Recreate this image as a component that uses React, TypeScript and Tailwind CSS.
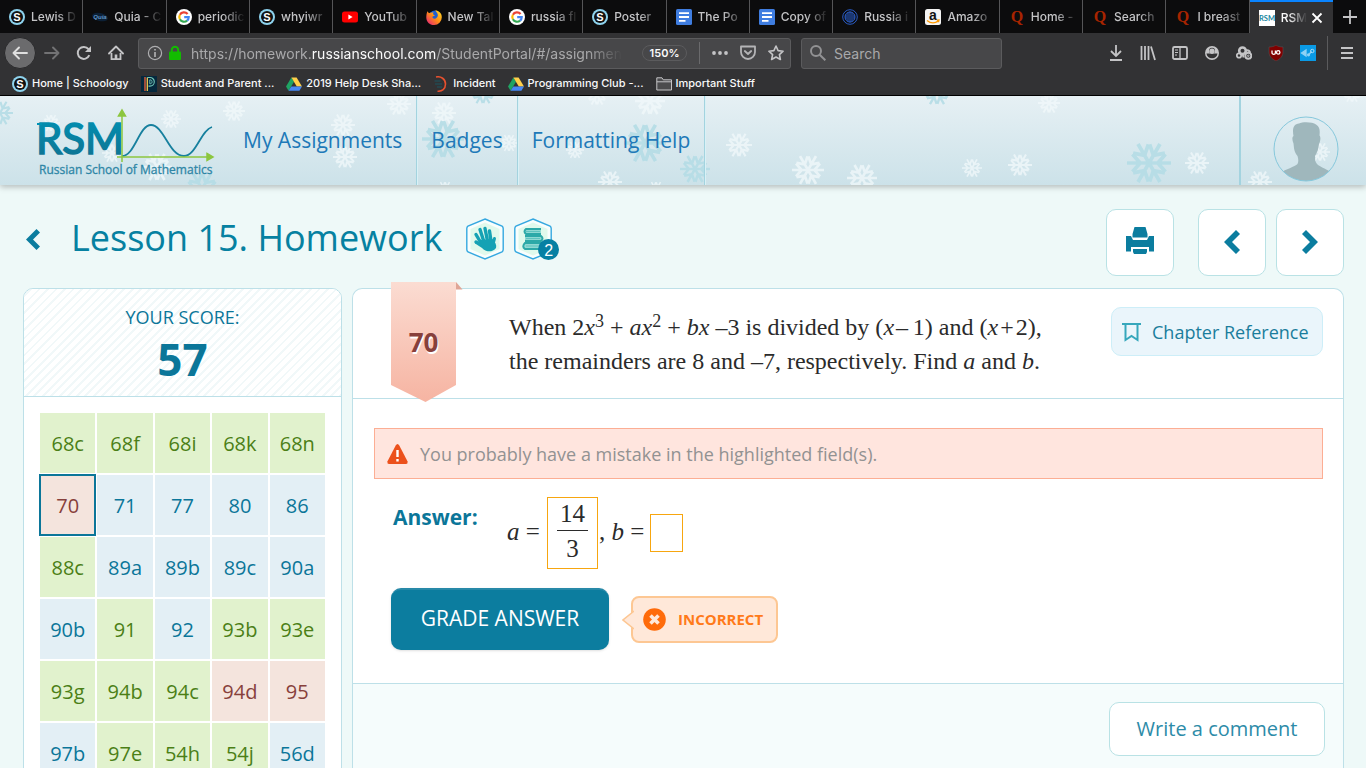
import React from "react";

const UI = "font-['Inter','Liberation_Sans',sans-serif]";
const SANS = "font-['Open_Sans','Noto_Sans',sans-serif]";
const SERIF = "font-['Liberation_Serif',serif]";

/* ---------- Site icons ---------- */

function SchoologyIcon() {
  return (
    <svg className="size-4 shrink-0" viewBox="0 0 16 16" aria-hidden="true">
      <circle cx="8" cy="8" r="8" fill="#8ed3ee" />
      <circle cx="8" cy="8" r="6" fill="#111" />
      <text x="8" y="12" textAnchor="middle" fontSize="11" fontWeight="700" fontFamily="Liberation Sans, sans-serif" fill="#fff">S</text>
    </svg>
  );
}

function QuiaIcon() {
  return (
    <svg className="size-4 shrink-0" viewBox="0 0 16 16" aria-hidden="true">
      <ellipse cx="8" cy="8" rx="8" ry="4" fill="#0c2036" transform="rotate(12 8 8)" />
      <text x="8" y="10" textAnchor="middle" fontSize="6" fontStyle="italic" fontWeight="700" fontFamily="Liberation Sans, sans-serif" fill="#5f93c4">Quia</text>
    </svg>
  );
}

function GoogleIcon() {
  return (
    <svg className="size-4 shrink-0" viewBox="0 0 16 16" aria-hidden="true">
      <circle cx="8" cy="8" r="8" fill="#fff" />
      <g fill="none" strokeWidth="2.2">
        <path d="M11.6 5A4.7 4.7 0 0 0 3.9 5.7" stroke="#ea4335" />
        <path d="M3.9 5.7a4.7 4.7 0 0 0 0 4.6" stroke="#fbbc05" />
        <path d="M3.9 10.3a4.7 4.7 0 0 0 7.2 1.3" stroke="#34a853" />
        <path d="M11.1 11.6A4.7 4.7 0 0 0 12.7 8.2H8.2" stroke="#4285f4" />
      </g>
    </svg>
  );
}

function YoutubeIcon() {
  return (
    <svg className="size-4 shrink-0" viewBox="0 0 16 16" aria-hidden="true">
      <rect x="0" y="2.5" width="16" height="11" rx="2.5" fill="#f00" />
      <path d="M6.4 5.6v4.8L10.6 8z" fill="#fff" />
    </svg>
  );
}

function FirefoxIcon() {
  return (
    <svg className="size-4 shrink-0" viewBox="0 0 16 16" aria-hidden="true">
      <defs>
        <linearGradient id="fox" x1="1" y1="0" x2="0" y2="1">
          <stop offset="0" stopColor="#ffe226" />
          <stop offset=".5" stopColor="#ff8a16" />
          <stop offset="1" stopColor="#e31587" />
        </linearGradient>
      </defs>
      <circle cx="8.6" cy="7" r="5.4" fill="#1f5fd0" />
      <path d="M1.4 2.2 3 4.2c1-.6 2-.7 3-.5L7.4 3 7 5.3l2 1.2-2.4.9c-.6 1.6 1 2.8 2.6 2.3 2.4-.8 3.2-3 2.2-5.2L9.2 1.2c4 .4 6.6 3.2 6.6 7A7.7 7.7 0 0 1 8 16C3.5 16 .3 12.7.3 8.4c0-2.5.4-4.4 1.1-6.2z" fill="url(#fox)" />
    </svg>
  );
}

function DocsIcon() {
  return (
    <svg className="size-4 shrink-0" viewBox="0 0 16 16" aria-hidden="true">
      <rect width="16" height="16" rx="1.5" fill="#3f7de0" />
      <path d="M3 4.2h10M3 8h10M3 11.8h6.5" stroke="#fff" strokeWidth="1.8" />
    </svg>
  );
}

function WilsonIcon() {
  return (
    <svg className="size-4 shrink-0" viewBox="0 0 16 16" fill="none" stroke="#2a5cc4" aria-hidden="true">
      <circle cx="8" cy="8" r="7.3" />
      <circle cx="8" cy="8" r="5" />
      <path d="M8 2.5v11M6 3.5v9M10 3.5v9M4 5.5v5M12 5.5v5" strokeWidth="1.1" />
    </svg>
  );
}

function AmazonIcon() {
  return (
    <svg className="size-4 shrink-0" viewBox="0 0 16 16" aria-hidden="true">
      <rect width="16" height="16" rx="2.5" fill="#f4f4f4" />
      <text x="8" y="10.5" textAnchor="middle" fontSize="14" fontWeight="700" fontFamily="Liberation Sans, sans-serif" fill="#111">a</text>
      <path d="M2 11.5c3.5 2.8 8 2.9 11.5.4M11.8 11.2l2.2-.2-.5 2.2" fill="none" stroke="#f90" strokeWidth="1.3" />
    </svg>
  );
}

function QuoraIcon() {
  return (
    <svg className="size-4 shrink-0" viewBox="0 0 16 16" aria-hidden="true">
      <text x="8" y="12.5" textAnchor="middle" fontSize="16" fontWeight="700" fontFamily="Liberation Serif, serif" fill="#a82400">Q</text>
    </svg>
  );
}

function RsmIcon() {
  return (
    <svg className="size-4 shrink-0" viewBox="0 0 16 16" aria-hidden="true">
      <rect width="16" height="16" fill="#fff" />
      <text x="8" y="10.5" textAnchor="middle" fontSize="7.5" fontWeight="700" fontFamily="Lato, sans-serif" fill="#1586a0">RSM</text>
    </svg>
  );
}

function DriveIcon() {
  return (
    <svg className="size-4 shrink-0" viewBox="0 0 16 16" aria-hidden="true">
      <path d="M5.4 1.5 0 10.5l2.6 4.3L8 5.8z" fill="#1fa463" />
      <path d="M5.4 1.5h5.2l5.4 9h-5.2z" fill="#ffd04b" />
      <path d="M2.6 14.8 5.3 10.5H16l-2.6 4.3z" fill="#4688f4" />
    </svg>
  );
}

function PowerSchoolIcon() {
  return (
    <svg className="size-4 shrink-0" viewBox="0 0 16 16" fill="none" aria-hidden="true">
      <rect width="16" height="16" fill="#06283d" />
      <path d="M4 1v14" stroke="#f0603c" strokeWidth="1.3" />
      <path d="M6.3 15V1.5" stroke="#f3c74f" strokeWidth="1.3" />
      <path d="M6.3 1.5H9a4.300 4.300 0 0 1 0 8.600H7.500" stroke="#6fc6b8" strokeWidth="1.1" />
      <path d="M8.800 3.800v4c3 .4 3-4.400 0-4z" stroke="#6fc6b8" strokeWidth=".9" />
    </svg>
  );
}

function IncidentIcon() {
  return (
    <svg className="size-4 shrink-0" viewBox="0 0 16 16" fill="none" aria-hidden="true">
      <path d="M3 1c5-1 9.500 2 9.500 7s-3.500 7.500-8 7.200" stroke="#e8512f" strokeWidth="1.600" />
      <path d="M1.500 5h6M2 8h7M4 11h5" stroke="#26434a" strokeWidth="2" />
    </svg>
  );
}

function FolderIcon() {
  return (
    <svg className="size-4 shrink-0" viewBox="0 0 16 16" fill="#4b4b4d" stroke="#c4c4c6" aria-hidden="true">
      <path d="M.8 14V1.800H6l1.200 2h8.300V14z" />
      <path d="M.8 5.800h14.700" />
    </svg>
  );
}

/* ---------- Browser chrome ---------- */

const tabs = [
  { icon: <SchoologyIcon />, title: "Lewis D" },
  { icon: <QuiaIcon />, title: "Quia - C" },
  { icon: <GoogleIcon />, title: "periodic" },
  { icon: <SchoologyIcon />, title: "whyiwr" },
  { icon: <YoutubeIcon />, title: "YouTub" },
  { icon: <FirefoxIcon />, title: "New Tal" },
  { icon: <GoogleIcon />, title: "russia fl" },
  { icon: <SchoologyIcon />, title: "Poster" },
  { icon: <DocsIcon />, title: "The Po" },
  { icon: <DocsIcon />, title: "Copy of" },
  { icon: <WilsonIcon />, title: "Russia i" },
  { icon: <AmazonIcon />, title: "Amazo" },
  { icon: <QuoraIcon />, title: "Home -" },
  { icon: <QuoraIcon />, title: "Search" },
  { icon: <QuoraIcon />, title: "I breast" },
];

function TabStrip() {
  return (
    <div className="flex h-[33px] bg-[#0c0c0d] text-xs font-medium text-[#c4c4c6]">
      {tabs.map((t, i) => (
        <button key={i} className="flex min-w-0 flex-1 items-center gap-1.5 border-r border-[#555557] pr-px pl-[9px]">
          {t.icon}
          <span className="min-w-0 flex-1 overflow-hidden text-left whitespace-nowrap [mask-image:linear-gradient(to_right,#000_50%,transparent_95%)]">{t.title}</span>
        </button>
      ))}
      <div className="flex min-w-0 flex-1 items-center border-t-2 border-[#0a84ff] bg-[#323234] pr-0.5 pl-[9px]">
        <RsmIcon />
        <span className="ml-1.5 min-w-0 flex-1 overflow-hidden whitespace-nowrap text-[#f9f9fa] [mask-image:linear-gradient(to_right,#000_30%,transparent)]">RSM</span>
        <button aria-label="Close tab" className="mr-2 ml-1 text-white">
          <svg className="size-3" viewBox="0 0 12 12" stroke="currentColor" strokeWidth="1.800"><path d="m1.500 1.500 9 9M10.500 1.500l-9 9" /></svg>
        </button>
      </div>
      <button aria-label="New tab" className="flex w-[33px] items-center justify-center text-[#c4c4c6]">
        <svg className="size-4" viewBox="0 0 16 16" stroke="currentColor" strokeWidth="1.800"><path d="M8 1v14M1 8h14" /></svg>
      </button>
    </div>
  );
}

function ToolButton({ label, children }: { label: string; children: React.ReactNode }) {
  return (
    <button aria-label={label} className="flex size-8 shrink-0 items-center justify-center text-[#c4c4c6]">
      <svg className="size-4" viewBox="0 0 16 16" fill="none" stroke="currentColor" strokeWidth="1.800">{children}</svg>
    </button>
  );
}

function Toolbar() {
  return (
    <div className="flex h-10 items-center pr-[3px] pl-1">
      <button aria-label="Back" className="flex size-8 shrink-0 items-center justify-center rounded-full border border-[#29292b] bg-[#6b6b6d] text-[#e0e0e0]">
        <svg className="size-4" viewBox="0 0 16 16" fill="none" stroke="currentColor" strokeWidth="1.900" strokeLinecap="round" strokeLinejoin="round"><path d="M15 8H1.500M7 2.500 1.500 8 7 13.500" /></svg>
      </button>
      <button aria-label="Forward" className="flex size-8 shrink-0 items-center justify-center text-[#727274]">
        <svg className="size-4" viewBox="0 0 16 16" fill="none" stroke="currentColor" strokeWidth="1.900" strokeLinecap="round" strokeLinejoin="round"><path d="M1 8h13.500M9 2.500 14.500 8 9 13.500" /></svg>
      </button>
      <ToolButton label="Reload">
        <path d="M13.300 10.200A6 6 0 1 1 12.500 4.200" strokeWidth="2" />
        <path d="M15 1v6H9z" fill="currentColor" stroke="none" />
      </ToolButton>
      <ToolButton label="Home">
        <path d="M1 8.500 8 1.500l7 7" strokeLinecap="round" strokeLinejoin="round" />
        <path d="M3.500 8v6.200h9V8" />
        <path d="M8 14V9.500" strokeWidth="2.600" />
      </ToolButton>
      <div className="ml-1.5 flex h-[31px] min-w-0 flex-1 items-center rounded-[3px] border border-[#5b5b5d] bg-[#474749]">
        <svg className="ml-2 size-4 shrink-0 text-[#aeaeb0]" viewBox="0 0 16 16" fill="none" stroke="currentColor" aria-hidden="true">
          <circle cx="8" cy="8" r="6.600" strokeWidth="1.200" />
          <path d="M8 7v5M8 4v1.600" strokeWidth="1.700" />
        </svg>
        <svg className="ml-1 size-4 shrink-0" viewBox="0 0 16 16" aria-hidden="true">
          <rect x="2" y="6.500" width="12" height="8.500" rx="1" fill="#12bc00" />
          <path d="M4.800 7V5a3.200 3.200 0 0 1 6.400 0v2" fill="none" stroke="#12bc00" strokeWidth="2" />
        </svg>
        <div className="ml-2 shrink overflow-hidden pt-0.5 text-sm whitespace-nowrap text-[#a9a9ab] [mask-image:linear-gradient(to_right,#000_92%,transparent)]">
          https://homework.<span className="text-[#f9f9fa]">russianschool.com</span>/StudentPortal/#/assignmen
        </div>
        <span className="flex-1" />
        <button className="flex h-4 w-[45px] shrink-0 items-center justify-center rounded-full border border-[#5b5b5d] text-[11px] font-semibold text-[#f9f9fa]">150%</button>
        <span className="mr-1.5 ml-3 h-[22px] w-px bg-[#6a6a6c]" />
        <button aria-label="Page actions" className="flex w-7 justify-center text-[#c4c4c6]">
          <svg className="size-4" viewBox="0 0 16 16" fill="currentColor"><circle cx="2" cy="8" r="1.900" /><circle cx="8" cy="8" r="1.900" /><circle cx="14" cy="8" r="1.900" /></svg>
        </button>
        <button aria-label="Save to Pocket" className="flex w-7 justify-center text-[#b4b4b6]">
          <svg className="size-4" viewBox="0 0 16 16" fill="none" stroke="currentColor" strokeWidth="1.800" strokeLinecap="round" strokeLinejoin="round">
            <path d="M1 1.500h14V7A7 7 0 0 1 1 7z" />
            <path d="m4.800 6 3.200 3 3.200-3" />
          </svg>
        </button>
        <button aria-label="Bookmark this page" className="flex w-7 justify-center text-[#c4c4c6]">
          <svg className="size-4" viewBox="0 0 16 16" fill="none" stroke="currentColor" strokeWidth="1.600" strokeLinejoin="round">
            <path d="m8 1 2.100 4.600 5 .6-3.700 3.400 1 4.900L8 12l-4.400 2.500 1-4.900L.9 6.200l5-.6z" />
          </svg>
        </button>
      </div>
      <label className="ml-2.5 flex h-[31px] w-[201px] shrink-0 items-center gap-2 rounded-[3px] border border-[#5b5b5d] bg-[#474749] pl-2">
        <svg className="size-4 shrink-0 text-[#929294]" viewBox="0 0 16 16" fill="none" stroke="currentColor" strokeWidth="2" aria-hidden="true">
          <circle cx="6" cy="6" r="5" />
          <path d="m9.700 9.700 5.600 5.600" />
        </svg>
        <input aria-label="Search" placeholder="Search" className="min-w-0 flex-1 bg-transparent pt-0.5 text-sm text-white outline-none placeholder:text-[#a9a9ab]" />
      </label>
      <span className="w-[98px] shrink" />
      <ToolButton label="Downloads"><path d="M8 0v10.500M3 6l5 5 5-5M2 15h12" /></ToolButton>
      <ToolButton label="Library"><path d="M1.500 1v14M5 1v14M8.500 1v14M11 1.500 15 15" /></ToolButton>
      <ToolButton label="Sidebars">
        <rect x="1" y="2" width="14" height="12" rx="1.500" />
        <path d="M8 2v12" strokeWidth="1.300" />
        <path d="M3 5h3M3 7.500h3M3 10h2" strokeWidth="1" />
      </ToolButton>
      <ToolButton label="Account">
        <circle cx="8" cy="8" r="7" fill="currentColor" stroke="none" />
        <circle cx="8" cy="5.800" r="3" fill="#323234" stroke="none" />
        <path d="M2.500 8.500h11c-.3 3-2.500 4.700-5.500 4.700s-5.200-1.700-5.500-4.700z" fill="#323234" stroke="none" />
        <circle cx="8" cy="6.300" r="2.700" fill="currentColor" stroke="none" />
      </ToolButton>
      <ToolButton label="Repository tools">
        <circle cx="6.500" cy="5.800" r="3.300" strokeWidth="2.600" />
        <circle cx="3" cy="10.500" r="2.200" strokeWidth="1.800" />
        <circle cx="12.300" cy="10.800" r="3" strokeWidth="1.900" />
        <circle cx="12.300" cy="10.800" r=".8" strokeWidth="1" />
        <path d="M9.500 5.500c2-.6 4 .2 4.600 2.200M5.500 8.500c1.500 1 2 2 2 4" strokeWidth="2" />
      </ToolButton>
      <button aria-label="uBlock Origin" className="flex size-8 shrink-0 items-center justify-center">
        <svg className="size-4" viewBox="0 0 16 16">
          <path d="M8 0c2 1.500 4 2 7 2v5c0 4-2.500 7-7 9-4.500-2-7-5-7-9V2c3 0 5-.5 7-2z" fill="#800000" stroke="#565658" strokeWidth=".5" />
          <path d="M4 5.500v2.200a1.700 1.700 0 0 0 3.400 0V5.500" fill="none" stroke="#fff" strokeWidth="1.300" />
          <circle cx="10.200" cy="7.400" r="1.700" fill="none" stroke="#fff" strokeWidth="1.300" />
        </svg>
      </button>
      <button aria-label="Extension" className="flex size-8 shrink-0 items-center justify-center">
        <svg className="size-4" viewBox="0 0 16 16">
          <rect width="16" height="16" fill="#0a9ae5" />
          <path d="M1.500 8 6 5v6zM8.500 10l3-3.500" stroke="#8fd2f5" strokeWidth="1.300" fill="#8fd2f5" />
          <circle cx="12.300" cy="6" r="1.700" fill="none" stroke="#a9dcf7" />
          <circle cx="8.500" cy="9.800" r="1.600" fill="#8fd2f5" />
        </svg>
      </button>
      <span className="mx-[3px] h-[34px] w-px bg-[#5b5b5d]" />
      <button aria-label="Open menu" className="flex size-8 shrink-0 items-center justify-center text-[#c4c4c6]">
        <svg className="size-4" viewBox="0 0 16 16" stroke="currentColor" strokeWidth="2"><path d="M2 3h12M2 8h12M2 13h12" /></svg>
      </button>
    </div>
  );
}

const bookmarks = [
  { icon: <SchoologyIcon />, title: "Home | Schoology" },
  { icon: <PowerSchoolIcon />, title: "Student and Parent ..." },
  { icon: <DriveIcon />, title: "2019 Help Desk Sha..." },
  { icon: <IncidentIcon />, title: "Incident" },
  { icon: <DriveIcon />, title: "Programming Club -..." },
  { icon: <FolderIcon />, title: "Important Stuff" },
];

function Bookmarks() {
  return (
    <div className="flex h-[23px] items-center gap-3 border-b border-black pb-px pl-3 text-[11px] font-medium text-[#f9f9fa]">
      {bookmarks.map((b) => (
        <a key={b.title} href="#" className="flex items-center gap-1 whitespace-nowrap">
          {b.icon}
          {b.title}
        </a>
      ))}
    </div>
  );
}

/* ---------- Site header ---------- */

const flakes: [number, number, number, boolean][] = [
  [0, 17, 13, true], [51, 27, 9, false], [171, 23, 10, false], [234, 15, 11, false],
  [343, 29, 12, false], [345, 61, 12, false], [399, 8, 12, false], [157, 71, 15, false],
  [112, 57, 10, false], [202, 93, 18, true], [444, 17, 12, false], [443, 43, 21, true],
  [445, 94, 9, false], [509, 47, 9, false], [483, -4, 13, true], [597, -1, 11, false],
  [650, 5, 15, false], [575, 54, 9, false], [645, 47, 21, true], [695, 73, 15, true],
  [610, 86, 12, false], [656, 94, 9, false], [739, 49, 13, false], [808, 74, 16, false],
  [862, 82, 15, false], [937, -4, 14, true], [1049, 7, 11, false], [972, 72, 10, false],
  [1020, 69, 12, false], [1149, 67, 22, true], [1197, 67, 12, false], [1260, 86, 12, false],
  [1320, 56, 10, false], [1352, -3, 10, false],
];

function Snow() {
  return (
    <svg className="absolute inset-0 size-full" aria-hidden="true">
      <defs>
        <g id="flake" fill="none" strokeWidth="1.700">
          {[0, 60, 120, 180, 240, 300].map((a) => (
            <path key={a} d="M0 0H10M4 0 7.500-4M4 0 7.500 4" transform={`rotate(${a})`} />
          ))}
        </g>
      </defs>
      {flakes.map(([x, y, r, teal], i) => (
        <use key={i} href="#flake" stroke={teal ? "#b5dde6" : "#f2f9fb"} opacity={teal ? 0.9 : 0.75} transform={`translate(${x} ${y}) scale(${r / 10})`} />
      ))}
    </svg>
  );
}

function Logo() {
  return (
    <svg className="h-[70px] w-[180px]" viewBox="0 0 180 70" role="img" aria-label="RSM Russian School of Mathematics">
      <defs>
        <linearGradient id="ink" x1="0" y1="0" x2="0" y2="1">
          <stop offset="0" stopColor="#0093b5" />
          <stop offset="1" stopColor="#10708f" />
        </linearGradient>
      </defs>
      <text x="0" y="46" fontSize="42" fontWeight="400" fontFamily="Lato, sans-serif" fill="url(#ink)" stroke="url(#ink)" strokeWidth="1.600">RSM</text>
      <path d="M1 16h5" stroke="#0093b5" strokeWidth="2" />
      <path d="M86 48c13 0 17-31 29-31 13 0 18 31 33 31 12 0 17-26 28-29" fill="none" stroke="#17809e" strokeWidth="1.800" />
      <path d="M86 3v51M81 49h94M82.500 8 86 2l3.500 6zM171 45.500l6 3.500-6 3.500z" fill="#8cc63f" stroke="#8cc63f" strokeWidth="1.500" />
      <text x="3" y="66" fontSize="12" fontFamily="Open Sans, sans-serif" fill="#2e86a6" stroke="#2e86a6" strokeWidth=".3">Russian School of Mathematics</text>
    </svg>
  );
}

function SiteHeader() {
  const item = "flex items-center border-r border-[#a3d3df] px-3.5 shadow-[1px_0_0_#d9f1f6]";
  return (
    <header className="relative z-10 flex h-[89px] shrink-0 bg-linear-to-b from-[#e6f0f4] to-[#cce2e9] shadow-[0_2px_6px_rgba(0,0,0,0.25)]">
      <Snow />
      <a href="#" className="relative ml-9 flex items-center pt-1"><Logo /></a>
      <nav className="relative ml-[13px] flex text-[21px] text-[#2079b8]">
        <a href="#" className={item}>My Assignments</a>
        <a href="#" className={item}>Badges</a>
        <a href="#" className={item}>Formatting Help</a>
      </nav>
      <div className="relative ml-auto flex items-center border-l-2 border-[#a3d3df] pt-4 pr-[27px] pl-8">
        <svg className="size-[66px]" viewBox="0 0 66 66" role="img" aria-label="Profile">
          <clipPath id="face"><circle cx="33" cy="33" r="32" /></clipPath>
          <path clipPath="url(#face)" d="M8 66v-9c4-4 14-6 16.500-9 1.500-3 .5-6 0-8-3.500-4-3.500-8-4-12.500-1.500-3.500-1.500-6.500 0-7.500-1.500-8 .5-12 5.500-12.500 4-2 14-1.500 17 1 4 2.500 4 6.500 3.500 11 1.500 1.500 1 5.500-.5 8.500-.5 5-2 9-4 12 0 3 0 6 2 8 3 3 12 6 15 9v9z" fill="#9fb7bc" />
          <circle cx="33" cy="33" r="32" fill="none" stroke="#86c8dc" />
        </svg>
      </div>
    </header>
  );
}

/* ---------- Lesson page ---------- */

function Chevron({ flip = false, className }: { flip?: boolean; className: string }) {
  return (
    <svg className={className} viewBox="0 0 16 24" aria-hidden="true">
      <path d={flip ? "M4 0 16 12 4 24 0 20 8 12 0 4z" : "M12 0 0 12 12 24l4-4L8 12l8-8z"} fill="#0b7d9f" />
    </svg>
  );
}

function Badge({ children }: { children: React.ReactNode }) {
  return (
    <svg className="h-[42px] w-[38px]" viewBox="0 0 38 42" aria-hidden="true">
      <path d="M19 1 36 8q1.200 1 1.200 2.500v21Q37.200 33 36 34L19 41 2 34Q.8 33 .8 31.500v-21Q.8 9 2 8z" fill="#f8fefd" stroke="#35a8e0" strokeWidth="1.400" />
      <path d="M19 4.500 33.500 11v20L19 37.500 4.500 31V11z" fill="#e0f9ec" />
      {children}
    </svg>
  );
}

function TitleBar() {
  const square = "flex h-[67px] w-[68px] items-center justify-center rounded-[10px] border border-[#b9e2e5] bg-white";
  return (
    <div className="flex items-start pt-6 pr-[22px] pl-[25px]">
      <a href="#" aria-label="Back to lessons" className="mt-5"><Chevron className="h-[21px] w-4" /></a>
      <h1 className="ml-[30px] text-[36px] leading-[58px] text-[#0681a1]">Lesson 15. Homework</h1>
      <div className="mt-[9px] ml-6 flex gap-2.5">
        <Badge>
          <g fill="none" stroke="#15a2b4" strokeLinecap="round" strokeWidth="3.400">
            <path d="M15 25 10 16.500M18 24 14 11.500M21.500 23 19 10.500M25 23l-1.500-10" />
            <path d="M26.500 28 28.500 20.500" strokeWidth="3" />
            <path d="M10 24 17 28.500" />
          </g>
          <path d="M14 22 26.500 21c2.500 3 4.500 6 3.500 9-3 4-9 4.500-13 1-2-2.500-3-5-3-9z" fill="#15a2b4" />
        </Badge>
        <div className="relative">
          <Badge>
            <g fill="#8fd9d3" stroke="#2ca9a8" strokeWidth="2">
              <path d="M27 11H12q-3 2.500 0 5h15" />
              <path d="M11 18h16q3 2.500 0 5H11" />
              <path d="M28 25H11q-3.500 3.500 0 6h17" />
            </g>
            <path d="M12 13.500h14M12 20.500h14M12 28h15" stroke="#5fc3bf" />
          </Badge>
          <span className="absolute -right-[7px] bottom-0 flex size-[21px] items-center justify-center rounded-full bg-[#0780a3] pt-0.5 font-['Liberation_Sans',sans-serif] text-base text-white">2</span>
        </div>
      </div>
      <div className="ml-auto flex">
        <button aria-label="Print" className={square}>
          <svg className="mb-1 size-7" viewBox="0 0 28 28" fill="#0b7d9f" aria-hidden="true">
            <path d="M8.500 0h11l2 7v3.500h-15V7zM0 9h5l2 4h14l2-4h5v15.500h-5V20H5v4.500H0zM7 22h14v3l-1 2H8l-1-2z" />
          </svg>
        </button>
        <button aria-label="Previous problem" className={square + " ml-6"}><Chevron className="mb-0.5 h-6 w-4" /></button>
        <button aria-label="Next problem" className={square + " ml-2.5"}><Chevron flip className="mb-0.5 h-6 w-4" /></button>
      </div>
    </div>
  );
}

type Status = "g" | "b" | "r";
const cells: [string, Status][] = [
  ["68c", "g"], ["68f", "g"], ["68i", "g"], ["68k", "g"], ["68n", "g"],
  ["70", "r"], ["71", "b"], ["77", "b"], ["80", "b"], ["86", "b"],
  ["88c", "g"], ["89a", "b"], ["89b", "b"], ["89c", "b"], ["90a", "b"],
  ["90b", "b"], ["91", "g"], ["92", "b"], ["93b", "g"], ["93e", "g"],
  ["93g", "g"], ["94b", "g"], ["94c", "g"], ["94d", "r"], ["95", "r"],
  ["97b", "b"], ["97e", "g"], ["54h", "g"], ["54j", "g"], ["56d", "b"],
];
const tone: Record<Status, string> = {
  g: "bg-[#e1f2cd] text-[#4b7f16]",
  b: "bg-[#e3eff5] text-[#0b7699]",
  r: "bg-[#f4e4dd] text-[#87403b]",
};

function ScorePanel() {
  return (
    <aside className="w-[319px] shrink-0 overflow-hidden rounded-t-[10px] border border-[#bde0e8] bg-white">
      <div className="flex h-[108px] flex-col items-center border-b border-[#bde0e8] bg-[repeating-linear-gradient(135deg,#fff_0,#fff_4px,#f1f8f9_4px,#f1f8f9_6px)] pt-4 text-[#0b7699]">
        <p className="text-lg leading-6">YOUR SCORE:</p>
        <p className="text-[44px] leading-[60px] font-bold">57</p>
      </div>
      <div className="grid grid-cols-5 gap-0.5 p-4">
        {cells.map(([name, s]) => (
          <a
            key={name}
            href="#"
            className={`flex h-[60px] items-center justify-center pt-0.5 text-xl ${tone[s]} ${name === "70" ? "outline-2 outline-[#0b7699] -outline-offset-1" : ""}`}
          >
            {name}
          </a>
        ))}
      </div>
    </aside>
  );
}

function Sup({ children }: { children: React.ReactNode }) {
  return <sup className="relative -top-2 align-baseline text-lg leading-none">{children}</sup>;
}

function Problem() {
  return (
    <div className="flex h-[110px] items-start border-b border-[#bde0e8] pr-5 pl-[38px]">
      <div className="relative h-[113px] w-[72px] shrink-0">
        <svg className="absolute -top-[7px] left-0 h-[120px] w-[72px]" viewBox="0 0 72 120" aria-hidden="true">
          <defs>
            <linearGradient id="ribbon" x1="0" y1="0" x2="0" y2="1">
              <stop offset="0" stopColor="#fbdcd2" />
              <stop offset="1" stopColor="#f6b4a2" />
            </linearGradient>
          </defs>
          <path d="M65 0l6.500 7.500H65z" fill="#dfa596" />
          <path d="M0 0h65v103L34.500 120 0 103z" fill="url(#ribbon)" />
        </svg>
        <span className="absolute top-[35px] left-0 w-[65px] text-center text-[26px] leading-9 font-bold text-[#87403b] [text-shadow:1px_2px_0_#fff]">70</span>
      </div>
      <p className={`mt-[21px] ml-[46px] flex-1 text-2xl leading-[34px] whitespace-nowrap text-[#2b2b2b] ${SERIF}`}>
        When 2<i>x</i><Sup>3</Sup> + <i>ax</i><Sup>2</Sup> + <i>bx</i> –3 is divided by (<i>x</i>{"\u200a"}–{"\u2009"}1) and (<i>x</i>{"\u200a"}+{"\u200a"}2),
        <br />
        the remainders are 8 and –7, respectively. Find <i>a</i> and <i>b</i>.
      </p>
      <button className="mt-[18px] flex h-[49px] w-[212px] shrink-0 items-center gap-[11px] rounded-[10px] border border-[#cdeef8] bg-[#eaf5fb] pl-2.5 text-lg text-[#1a7d9c]">
        <svg className="h-5 w-[19px]" viewBox="0 0 19 20" fill="none" stroke="#36a7bc" strokeWidth="2" aria-hidden="true">
          <path d="M0 2h19M3.500 2v16l6-4 6 4V2" />
        </svg>
        Chapter Reference
      </button>
    </div>
  );
}

function AnswerArea() {
  return (
    <div className="h-[285px] border-b border-[#bde0e8] pt-[29px] pr-5 pl-[21px]">
      <div role="alert" className="flex h-[51px] items-center gap-3 border border-[#fcae94] bg-[#ffe5de] pl-3 text-lg text-[#929292]">
        <svg className="h-5 w-[21px]" viewBox="0 0 21 20" aria-hidden="true">
          <path d="M10.500 0q1 0 1.800 1.500l8.300 16Q21 20 19 20H2Q0 20 .4 17.500l8.300-16Q9.500 0 10.500 0z" fill="#ec511c" />
          <path d="M10.500 6v7M10.500 15v2.500" stroke="#fff" strokeWidth="2.400" />
        </svg>
        You probably have a mistake in the highlighted field(s).
      </div>
      <div className="mt-[18px] flex pl-[19px]">
        <span className="mt-0.5 w-[114px] text-[21px] leading-9 font-bold text-[#0b7699]">Answer:</span>
        <div className={`flex items-center text-[25px] text-[#2b2b2b] ${SERIF}`}>
          <span className="mb-0.5 w-10"><i>a</i> =</span>
          <div className="flex h-[72px] w-[51px] flex-col items-center border border-[#f7a60f]">
            <input aria-label="a numerator" defaultValue="14" className="h-8 w-9 shrink-0 bg-transparent text-center outline-none" />
            <span className="h-px w-[31px] shrink-0 bg-[#2b2b2b]" />
            <input aria-label="a denominator" defaultValue="3" className="h-9 w-9 shrink-0 bg-transparent text-center outline-none" />
          </div>
          <span className="mb-0.5 w-[52px] pl-px">, <i>b</i> =</span>
          <input aria-label="b" className="h-[38px] w-[33px] border border-[#f7a60f] bg-white text-center outline-none" />
        </div>
      </div>
      <div className="mt-[19px] flex items-center pl-[17px]">
        <button className="h-[62px] w-[218px] rounded-[10px] border-t-2 border-[#2789a8] bg-[#0c7d9f] pb-0.5 text-[21px] text-white shadow-sm">GRADE ANSWER</button>
        <div className="relative ml-[22px] flex h-[47px] w-[147px] items-center gap-3 rounded-lg border-2 border-[#fdc793] bg-[#ffe8d9] pl-2.5 text-[15px] font-bold text-[#ff7a1a]">
          <svg className="absolute top-3 -left-[11px] h-5 w-3" viewBox="0 0 12 20" aria-hidden="true">
            <path d="M12 1 1 10l11 9" fill="#ffe8d9" stroke="#fdc793" strokeWidth="1.500" />
          </svg>
          <svg className="size-[23px]" viewBox="0 0 23 23" aria-hidden="true">
            <circle cx="11.500" cy="11.500" r="11.300" fill="#ff6b0a" />
            <path d="m7.500 7.500 8 8M15.500 7.500l-8 8" stroke="#ffe8d9" strokeWidth="3.600" />
          </svg>
          INCORRECT
        </div>
      </div>
    </div>
  );
}

export default function App() {
  return (
    <div className={`flex h-screen flex-col overflow-hidden bg-[#eef9f8] ${SANS}`}>
      <div className={`shrink-0 bg-[#323234] ${UI}`}>
        <TabStrip />
        <Toolbar />
        <Bookmarks />
      </div>
      <SiteHeader />
      <TitleBar />
      <main className="mt-3 flex min-h-0 flex-1 items-start gap-2.5 pr-[22px] pl-[23px]">
        <ScorePanel />
        <section className="min-w-0 flex-1 self-stretch">
          <div className="rounded-t-[10px] border-x border-t border-[#bde0e8] bg-white">
            <Problem />
            <AnswerArea />
            <div className="flex h-[110px] items-start justify-end bg-[#f5fcfc] pt-[18px] pr-[18px]">
              <button className="h-[54px] w-[216px] rounded-[10px] border border-[#b9e2e5] bg-white text-xl text-[#2d8ba8]">Write a comment</button>
            </div>
          </div>
        </section>
      </main>
    </div>
  );
}
